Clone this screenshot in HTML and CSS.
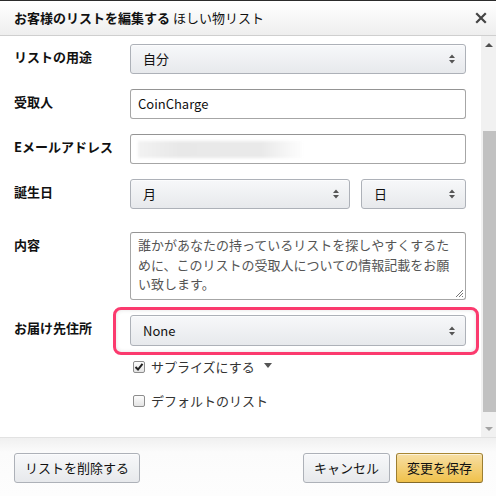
FILE: index.html
```html
<!DOCTYPE html>
<html lang="ja">
<head>
<meta charset="utf-8">
<title>お客様のリストを編集する</title>
<link rel="stylesheet" href="styles.css">
</head>
<body>
<div class="dialog">
  <header class="hd">
    <h1 class="title"><b>お客様のリストを編集する</b> ほしい物リスト</h1>
    <svg class="close" width="12" height="12" viewBox="0 0 12 12"><path d="M2 2 L10 10 M10 2 L2 10" stroke="#444" stroke-width="2.2" stroke-linecap="square"/></svg>
  </header>
  <div class="main">
    <div class="content">
      <div class="row">
        <div class="lbl">リストの用途</div>
        <div class="sel">自分<svg class="arr" width="6" height="10" viewBox="0 0 6 10"><path d="M0 4 L3 0.5 L6 4 Z M0 6 L3 9.5 L6 6 Z" fill="#555"/></svg></div>
      </div>
      <div class="row">
        <div class="lbl">受取人</div>
        <div class="inp">CoinCharge</div>
      </div>
      <div class="row">
        <div class="lbl">Eメールアドレス</div>
        <div class="inp"><span class="blur"></span></div>
      </div>
      <div class="row">
        <div class="lbl">誕生日</div>
        <div class="pair">
          <div class="sel month">月<svg class="arr" width="6" height="10" viewBox="0 0 6 10"><path d="M0 4 L3 0.5 L6 4 Z M0 6 L3 9.5 L6 6 Z" fill="#555"/></svg></div>
          <div class="sel day">日<svg class="arr" width="6" height="10" viewBox="0 0 6 10"><path d="M0 4 L3 0.5 L6 4 Z M0 6 L3 9.5 L6 6 Z" fill="#555"/></svg></div>
        </div>
      </div>
      <div class="row row-ta">
        <div class="lbl">内容</div>
        <div class="ta">誰かがあなたの持っているリストを探しやすくするために、このリストの受取人についての情報記載をお願い致します。<svg class="grip" width="9" height="9" viewBox="0 0 9 9"><path d="M8 1 L1 8 M8 4 L4 8 M8 7 L7 8" stroke="#777" stroke-width="1"/></svg></div>
      </div>
      <div class="row">
        <div class="lbl">お届け先住所</div>
        <div class="sel addr">None<svg class="arr" width="6" height="10" viewBox="0 0 6 10"><path d="M0 4 L3 0.5 L6 4 Z M0 6 L3 9.5 L6 6 Z" fill="#555"/></svg><span class="hl"></span></div>
      </div>
      <div class="checks">
        <div class="chk"><span class="box"><svg width="10" height="10" viewBox="0 0 10 10"><path d="M1.5 5 L4 7.5 L8.5 1.8" stroke="#222" stroke-width="2" fill="none"/></svg></span>サプライズにする<span class="tri"></span></div>
        <div class="chk chk2"><span class="box"></span>デフォルトのリスト</div>
      </div>
    </div>
    <div class="sb">
      <div class="sb-btn"><span class="up"></span></div>
      <div class="sb-track"><div class="thumb"></div></div>
      <div class="sb-btn"><span class="down"></span></div>
    </div>
  </div>
  <footer class="ft">
    <button class="btn del">リストを削除する</button>
    <div class="spacer"></div>
    <button class="btn cancel">キャンセル</button>
    <button class="btn primary">変更を保存</button>
  </footer>
</div>
</body>
</html>
```
FILE: styles.css
```css
* { box-sizing: border-box; }
html, body { margin: 0; padding: 0; background: #fff; }
body {
  font-family: "Noto Sans CJK JP", "Noto Sans", sans-serif;
  font-size: 13px;
  color: #111;
}
.dialog {
  width: 496px;
  height: 496px;
  display: flex;
  flex-direction: column;
  overflow: hidden;
}
.hd {
  height: 36px;
  border-top: 1px solid #2b2b2b;
  border-bottom: 1px solid #cfcfcf;
  background: linear-gradient(#ffffff, #eeeeee);
  display: flex;
  align-items: center;
  padding: 0 7px 0 14px;
}
.title {
  flex: 1;
  margin: 0;
  font-size: 13px;
  font-weight: normal;
  line-height: 16px;
  color: #111;
  white-space: nowrap;
}
.title b { font-weight: bold; }
.close { display: block; margin-right: 2px; }
.main {
  height: 401px;
  display: flex;
}
.content {
  flex: 1;
  padding: 8px 15px 0 14px;
}
.row {
  display: flex;
  margin-bottom: 15px;
}
.row-ta { margin-top: 23px; }
.lbl {
  width: 116px;
  flex: none;
  font-weight: bold;
  line-height: 16px;
  padding-top: 5px;
  color: #111;
  white-space: nowrap;
}
.sel, .inp, .ta {
  flex: 1;
  height: 30px;
  border-radius: 3px;
  line-height: 16px;
}
.sel {
  position: relative;
  display: flex;
  align-items: center;
  padding: 0 10px 0 12px;
  border: 1px solid #adb1b8;
  background: linear-gradient(#f7f8fa, #e7e9ec);
  box-shadow: inset 0 1px 0 rgba(255,255,255,0.6);
}
.sel .arr { margin-left: auto; display: block; }
.inp {
  display: flex;
  align-items: center;
  padding: 0 7px;
  border: 1px solid #a6a6a6;
  border-top-color: #949494;
  background: #fff;
}
.blur {
  display: block;
  width: 164px;
  height: 17px;
  margin-top: 1px;
  background: linear-gradient(to right, #f2f2f2, #e8e8e8 25%, #e9e9e9 75%, #fdfdfd);
  filter: blur(1.5px);
}
.pair {
  flex: 1;
  display: flex;
  gap: 11px;
}
.month { flex: none; width: 220px; }
.day { flex: 1; }
.ta {
  position: relative;
  height: 68px;
  padding: 2px 7px;
  border: 1px solid #a6a6a6;
  border-top-color: #949494;
  background: #fff;
  color: #555;
  line-height: 19.5px;
}
.grip { position: absolute; right: 1px; bottom: 1px; }
.addr { height: 31px; }
.hl {
  position: absolute;
  left: -18px;
  right: -14px;
  top: -9px;
  bottom: -10px;
  border: 3px solid #fb3a6e;
  border-radius: 8px;
  box-shadow: inset 0 0 4px rgba(0,0,0,0.12);
  pointer-events: none;
}
.checks {
  padding-left: 119px;
  margin-top: -3px;
}
.chk {
  display: flex;
  align-items: center;
  height: 18px;
  color: #333;
  line-height: 16px;
}
.chk2 { margin-top: 16px; }
.box {
  width: 12px;
  height: 12px;
  border: 1px solid #8d8d8d;
  border-radius: 2px;
  background: linear-gradient(#fdfdfd, #e4e4e4);
  margin-right: 6px;
  display: flex;
  align-items: center;
  justify-content: center;
}
.box svg { display: block; }
.tri {
  width: 0;
  height: 0;
  border-left: 4px solid transparent;
  border-right: 4px solid transparent;
  border-top: 5px solid #555;
  margin-left: 9px;
  margin-top: -3px;
}
.sb {
  width: 15px;
  flex: none;
  background: #f1f1f1;
  display: flex;
  flex-direction: column;
}
.sb-btn {
  height: 17px;
  display: flex;
  align-items: center;
  justify-content: center;
}
.up {
  width: 0; height: 0;
  border-left: 4px solid transparent;
  border-right: 4px solid transparent;
  border-bottom: 4px solid #505050;
}
.down {
  width: 0; height: 0;
  border-left: 4px solid transparent;
  border-right: 4px solid transparent;
  border-top: 4px solid #a3a3a3;
}
.sb-track { flex: 1; padding: 78px 0 0 2px; }
.thumb { height: 281px; background: #c1c1c1; }
.ft {
  flex: 1;
  display: flex;
  align-items: flex-start;
  gap: 6px;
  padding: 15px 13px 0 14px;
  border-top: 1px solid #e2e2e2;
  background: linear-gradient(#f0f0f0, #fbfbfb 14px, #fdfdfd);
}
.spacer { flex: 1; }
.btn {
  height: 30px;
  padding: 0;
  font-family: inherit;
  font-size: 13px;
  color: #111;
  line-height: 16px;
  border: 1px solid #adb1b8;
  border-radius: 3px;
  background: linear-gradient(#f7f8fa, #e7e9ec);
  box-shadow: inset 0 1px 0 rgba(255,255,255,0.6);
}
.btn.del { width: 126px; }
.btn.cancel, .btn.primary { width: 87px; }
.btn.primary {
  border-color: #a88734 #9c7e31 #846a29;
  background: linear-gradient(#f7dfa5, #f0c14b);
}
```
